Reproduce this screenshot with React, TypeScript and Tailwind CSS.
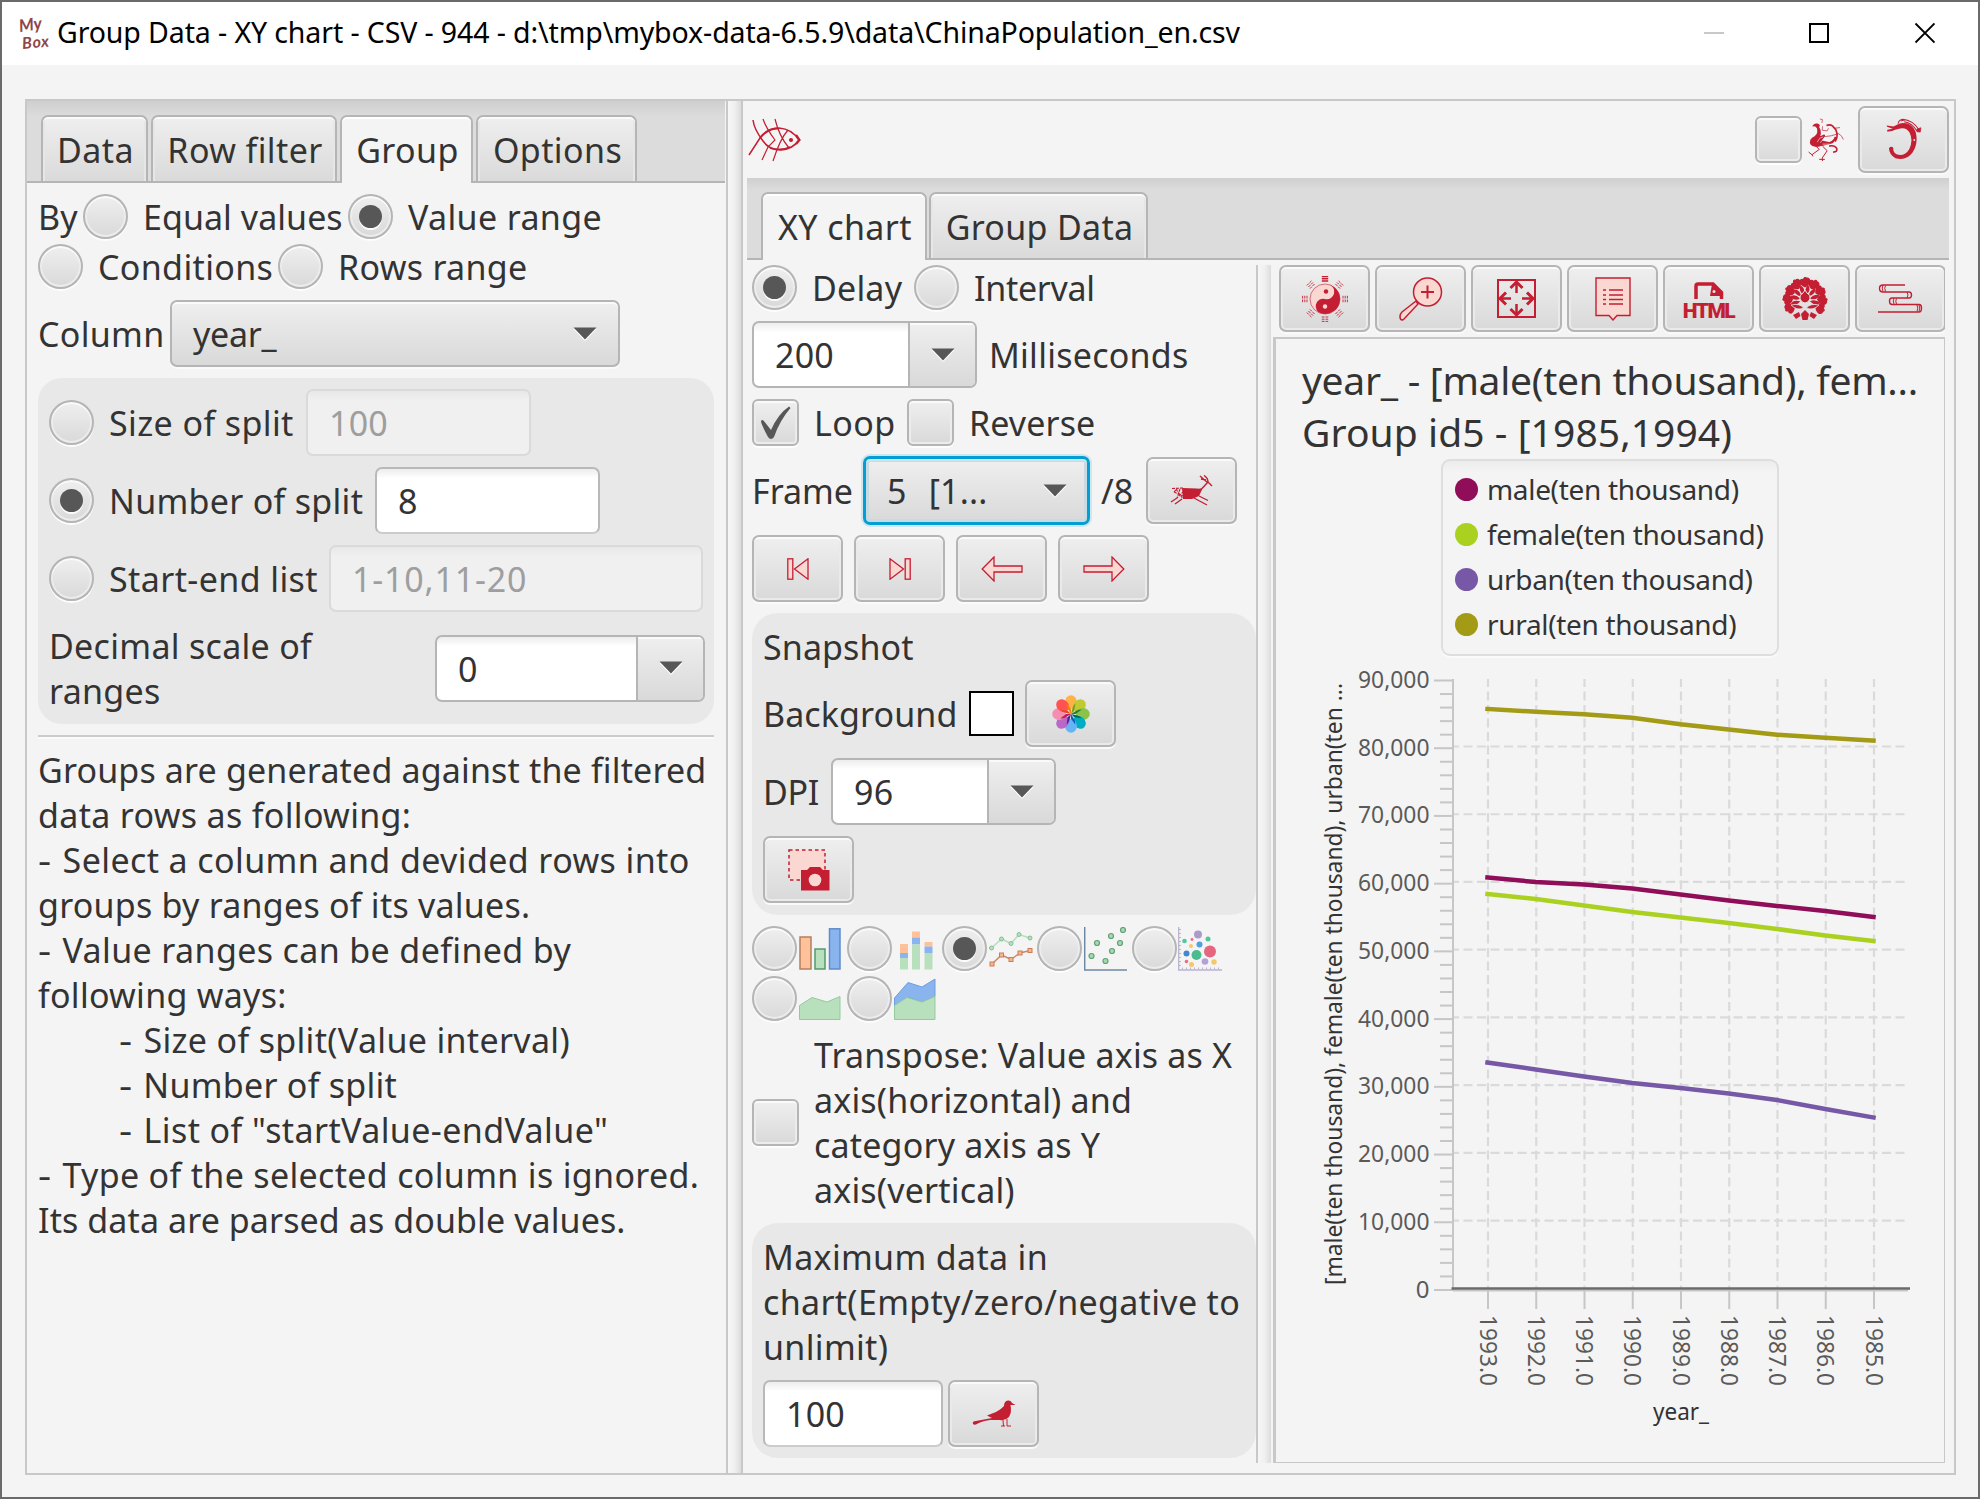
import React from "react";

const RED = "#c41e33";
const PINK = "#fbd7d2";

type Kids = { children?: React.ReactNode; className?: string };

function L({ children, className = "" }: Kids) {
  return <span className={`block shrink-0 translate-y-px whitespace-pre ${className}`}>{children}</span>;
}

function Radio({ on = false, className = "" }: { on?: boolean; className?: string }) {
  return (
    <span
      className={`flex size-[45px] shrink-0 items-center justify-center rounded-full border-2 border-[#b5b5b5] bg-linear-to-b from-[#efefef] to-[#d9d9d9] shadow-[inset_0_2px_0_#fafafa,inset_0_0_0_2px_#ececec,0_2px_0_#fdfdfd] ${className}`}
    >
      {on && <span className="size-[23px] rounded-full bg-[#575757] shadow-[0_2px_0_#fafafa]" />}
    </span>
  );
}

function Check({ on = false, className = "" }: { on?: boolean; className?: string }) {
  return (
    <span
      className={`flex size-[47px] shrink-0 items-center justify-center rounded-[6px] border-2 border-[#b5b5b5] bg-linear-to-b from-[#efefef] to-[#d9d9d9] shadow-[inset_0_2px_0_#fafafa,inset_0_0_0_2px_#ececec,0_2px_0_#fdfdfd] ${className}`}
    >
      {on && (
        <svg width="32" height="34" viewBox="0 0 32 34">
          <path d="M1 16 Q1 13 3.500 14.500 L11 24 Q18 8 29 .5 L30.500 2 Q20 14 14 31 Q11 35 8 31 Q3 22 1 16Z" fill="#575757" />
        </svg>
      )}
    </span>
  );
}

function Btn({ children, className = "w-[91px]" }: Kids) {
  return (
    <button
      className={`flex h-[67px] shrink-0 items-center justify-center rounded-[7px] border-2 border-[#b5b5b5] bg-linear-to-b from-[#efefef] to-[#d9d9d9] shadow-[inset_0_2px_0_#fafafa,inset_0_0_0_2px_#eaeaea,0_2px_0_#fafafa] ${className}`}
    >
      {children}
    </button>
  );
}

function Arrow() {
  return (
    <svg width="24" height="14" viewBox="0 0 24 14" className="shrink-0">
      <path d="M.5 2 H23.500 L12 14Z" fill="#fff" />
      <path d="M.5 .5 H23.500 L12 12.500Z" fill="#575757" />
    </svg>
  );
}

function Field({ children, className = "", disabled = false }: Kids & { disabled?: boolean }) {
  return (
    <span
      className={`flex h-[67px] shrink-0 items-center rounded-[7px] border-2 pl-[21px] ${
        disabled
          ? "border-[#dadada] bg-linear-to-b from-[#e8e8e8] to-[#f0f0f0] to-15% text-[#9e9e9e]"
          : "border-[#b9b9b9] border-b-[#cccccc] bg-linear-to-b from-[#ededed] to-white to-15%"
      } ${className}`}
    >
      <L>{children}</L>
    </span>
  );
}

function EditCombo({ children, className = "" }: Kids) {
  return (
    <span className={`flex h-[67px] shrink-0 overflow-hidden rounded-[7px] border-2 border-[#b5b5b5] bg-linear-to-b from-[#ededed] to-white to-15% ${className}`}>
      <span className="flex flex-1 items-center pl-[21px]"><L>{children}</L></span>
      <span className="flex w-[67px] items-center justify-center border-l-2 border-[#b5b5b5] bg-linear-to-b from-[#efefef] to-[#d9d9d9] shadow-[inset_0_2px_0_#fafafa]">
        <Arrow />
      </span>
    </span>
  );
}

function Tab({ children, active = false, className = "" }: Kids & { active?: boolean }) {
  return (
    <span
      className={`flex shrink-0 items-center justify-center whitespace-pre rounded-t-[7px] border-2 border-b-0 border-[#b5b5b5] pl-[2px] ${
        active
          ? "h-[68px] bg-[#f4f4f4] pt-px shadow-[inset_0_2px_0_#ffffff]"
          : "h-[66px] bg-linear-to-b from-[#efefef] to-[#dadada] pt-[3px] shadow-[inset_0_2px_0_#fafafa,inset_-2px_0_0_#e6e6e6,inset_2px_0_0_#e6e6e6]"
      } ${className}`}
    >
      {children}
    </span>
  );
}

function Divider() {
  return <div className="w-[13px] shrink-0 bg-linear-to-r from-[#f6f6f6] via-[#f0f0f0] to-[#dcdcdc]" />;
}

/* ---------- icons ---------- */

function Fish() {
  return (
    <svg width="53" height="44" viewBox="0 0 53 44" fill="none" stroke={RED} strokeWidth="1.500">
      <path d="M1 37 L12 20 Q19 10 31 10 Q44 11 51 22 Q45 31 33 32 Q21 32 15 23 Q6 11 5 2" />
      <path d="M15 1 Q18 10 27 22 L20 29 L14 42M27 1 Q31 18 41 30M40 12 Q32 21 25 43" strokeWidth="1.200" />
      <path d="M12 20 Q20 10 30 10.500M22 30 Q34 33 42 29" strokeWidth="1.800" />
      <path d="M48 17 L51.500 22 L48 26" strokeWidth="2.200" />
      <circle cx="43" cy="22" r="1.300" fill={RED} />
    </svg>
  );
}

function Phoenix() {
  return (
    <svg width="36" height="43" viewBox="205 53 107 130" fill="none" stroke={RED}>
      <path d="M217 78 Q222 67 232 70 Q243 72 238 81 Q245 90 243 101 Q238 110 246 106 Q256 99 256 108 L246 121 L270 126 Q258 137 243 138 Q222 146 211 132 Q206 116 224 108 Q236 98 231 84 Q226 76 219 79Z" fill={RED} stroke="none" />
      <path d="M240 56 L248 58 L246 68M248 78 L247 90 L262 92 L266 84" strokeWidth="2" />
      <path d="M260 76 Q270 71 278 77 L288 88 Q297 108 286 124" strokeWidth="5" />
      <path d="M288 110 Q284 130 256 131" strokeWidth="7" />
      <path d="M284 84 L301 82M290 100 Q302 98 311 118M256 109 Q276 108 290 102" strokeWidth="2.200" />
      <path d="M268 138 Q284 134 291 145 Q294 156 280 156" strokeWidth="5" />
      <path d="M230 140 L238 148 L216 164 M206 156 L216 164 L219 169M248 138 L262 152 L247 174 M238 178 L255 178 M247 174 L248 183" strokeWidth="3" />
      <path d="M232 126 Q238 110 250 110M241 128 L256 110M248 132 H272" stroke="#f4f4f4" strokeWidth="1.800" />
    </svg>
  );
}

function Dragon() {
  return (
    <svg width="36" height="43" viewBox="440 55 107 128" fill="none" stroke={RED}>
      <path d="M474 74 Q512 60 528 96 Q537 130 519 158 Q500 184 468 175 Q448 162 449 144 Q456 137 462 144 Q459 156 473 164 Q496 170 509 148 Q522 122 510 98 Q500 82 482 86 L467 90 Q456 97 443 95 L444 90 L460 87 L443 81 L442 77 L462 80 Q466 78 474 74Z" fill={RED} stroke="none" />
      <path d="M476 72 Q478 60 490 59 Q520 62 538 90 M494 66 Q518 70 532 94 M484 64 Q500 58 508 64" strokeWidth="3" />
      <path d="M532 88 L544 84 L542 97 L532 96Z" fill={RED} strokeWidth="2" />
      <rect x="522" y="118" width="4" height="5" fill="#fff" stroke="none" />
    </svg>
  );
}

function Bagua() {
  return (
    <svg width="46" height="46" viewBox="-23 -23 46 46">
      <circle r="15" fill={PINK} stroke={RED} strokeWidth=".6" />
      <path d="M0 -15 A15 15 0 0 1 0 15 A7.500 7.500 0 0 1 0 0 A7.500 7.500 0 0 0 0 -15Z" fill={RED} transform="rotate(14)" />
      <circle cx="1" cy="-7.500" r="2.200" fill={RED} />
      <circle cx="0" cy="7.500" r="2.200" fill={PINK} />
      {[0, 45, 90, 135, 180, 225, 270, 315].map((a, i) => (
        <path
          key={a}
          d="M-3.200 -22.400H3.200M-3.200 -20.200H3.200M-3.200 -18H3.200"
          transform={`rotate(${a})`}
          stroke={RED}
          strokeWidth={i === 0 ? 1.4 : 0.9}
          strokeDasharray={i === 0 ? undefined : "2.700 1"}
        />
      ))}
    </svg>
  );
}

function Magnifier() {
  return (
    <svg width="44" height="44" viewBox="0 0 44 44" stroke={RED} strokeWidth="1.500">
      <path d="M1.500 42 Q0 38 3 35 L17 24 L19 27 L5 42 Q3 44 1.500 42Z" fill={PINK} />
      <circle cx="28.500" cy="15" r="14" fill={PINK} />
      <path d="M28.500 8.500V21.500M22 15H35" strokeWidth="2" />
    </svg>
  );
}

function FourArrows() {
  return (
    <svg width="39" height="39" viewBox="0 0 39 39" fill="none" stroke={RED} strokeWidth="2">
      <rect x="1" y="1" width="37" height="37" />
      <path d="M19.500 3V14M19.500 25V36M3 19.500H14M25 19.500H36" strokeWidth="2.500" />
      <path d="M13.500 9 L19.500 3 L25.500 9M13.500 30 L19.500 36 L25.500 30M9 13.500 L3 19.500 L9 25.500M30 13.500 L36 19.500 L30 25.500" strokeWidth="3" />
    </svg>
  );
}

function Note() {
  return (
    <svg width="36" height="44" viewBox="0 0 36 44" stroke={RED}>
      <path d="M1 1H35V38.500H22 L18 43 L14 38.500H1Z" fill={PINK} strokeWidth="1.400" />
      <path d="M14 13H28M14 18H28M14 22.500H28M14 27H28" strokeWidth="1.400" />
      <path d="M8 13H11M8 18H11M8 22.500H11M8 27H11" strokeWidth="1.600" />
    </svg>
  );
}

function HtmlIcon() {
  return (
    <span className="flex flex-col items-center pt-[8px]">
      <svg width="30" height="17" viewBox="0 0 30 17">
        <path d="M2 17 V4 Q2 2 4 2 H19 L27.500 10.500 V17" fill="none" stroke={RED} strokeWidth="3.500" />
        <path d="M18 2 L28 11 V14 H16Z" fill={RED} />
        <circle cx="20" cy="9.500" r="1.500" fill="#e6e6e6" />
      </svg>
      <span className="font-['Roboto'] text-[21px] leading-[24px] font-black tracking-[-1.5px] text-[#c41e33]">HTML</span>
    </span>
  );
}

function Peony() {
  const petal = "M0 -12 Q-5.500 -14 -5.500 -19 Q-4 -21.500 -2 -20.500 Q-.5 -24 1.500 -22 Q5 -22.500 5.500 -18.500 Q5 -14.500 0 -12Z";
  const side = "M0 -5 Q-4 -10 -1 -15.500 Q4 -12 0 -5Z";
  return (
    <svg width="46" height="44" viewBox="-23 -22 46 44" fill={RED}>
      {[-120, -90, -60, -30, 0, 30, 60, 90, 120].map((a) => (
        <path key={a} d={petal} transform={`translate(0 .5) rotate(${a})`} />
      ))}
      {[-105, -75, -45, -15, 15, 45, 75, 105].map((a) => (
        <path key={a} d={side} transform={`translate(0 1) rotate(${a})`} />
      ))}
      <path d="M0 -9 L2 -6 Q6 -4 5 0 Q3 4 0 4 Q-3 4 -5 0 Q-6 -4 -2 -6Z" stroke="#e6e6e6" strokeWidth="1" />
      <path d="M-14 6 Q-5 4 -1.500 9 Q-8 12 -14 6ZM14 6 Q5 4 1.500 9 Q8 12 14 6Z" stroke="#e6e6e6" strokeWidth=".8" />
      <path d="M0 11 L4 15 L2.500 21 H-2.500 L-4 15ZM-6 13 L-4.500 17 L-9 20 L-12 16ZM6 13 L4.500 17 L9 20 L12 16Z" />
    </svg>
  );
}

function Scroll() {
  return (
    <svg width="45" height="29" viewBox="0 0 45 29" fill="none" stroke={RED} strokeWidth="1.400">
      <path d="M27 1 H5 Q1.500 1 1.500 4.500 Q1.500 8 5 8 H31 Q33.500 8 33.500 11 Q33.500 14 31 14 H14 Q11.500 14 11.500 17 Q11.500 20.500 14 20.500 H41 Q43.500 20.500 43.500 24 Q43.500 28 41 28 H0" />
      <path d="M5 1 Q3.500 4 5 7.500M7.500 1.500 Q6 4 7.500 7.500M29 8 Q31 11 29 14M16 14 Q14.500 17 16 20M18.500 14.500 Q17 17 18.500 20M39 21 Q40.500 24 39 27.500M41 21 Q42.500 24 41 27.500" strokeWidth="1" />
    </svg>
  );
}

function Deer() {
  return (
    <svg width="43" height="31" viewBox="0 0 43 31" fill="none" stroke={RED}>
      <path d="M12 13 L27 13.500 Q31 14 33 12.500 L29 21 L22 24 L13 24Z" fill={RED} stroke="none" />
      <path d="M32 13.500 L38 7 L42 11M38 8 L30 1M38 7 Q38 3 34 .5M31 4 L36 5" strokeWidth="1.400" />
      <path d="M24 23 L37 30M29 21 L38 25.500M12 24 L5 29M7 23 L1 27" strokeWidth="1.300" />
      <path d="M2 13.500 L13 13M4 17 L13 21M6 14 L13 24M10 14 L7 23 L13 17M4 17 L8 13" strokeWidth="1.100" strokeDasharray="3 1" />
    </svg>
  );
}

function SkipStart({ flip = false }: { flip?: boolean }) {
  return (
    <svg width="22" height="22" viewBox="0 0 22 22" className={flip ? "-scale-x-100" : ""} fill={PINK} stroke={RED} strokeWidth="1.300">
      <rect x=".8" y=".8" width="5" height="20.400" />
      <path d="M21 .8 V21.200 L7.500 11Z" />
    </svg>
  );
}

function LongArrow({ flip = false }: { flip?: boolean }) {
  return (
    <svg width="42" height="26" viewBox="0 0 42 26" className={flip ? "-scale-x-100" : ""} fill={PINK} stroke={RED} strokeWidth="1.300">
      <path d="M1.200 13 L13 1 V10 H41 V16 H13 V25Z" />
    </svg>
  );
}

function Palette() {
  const petals = ["#ffb347", "#bfcb30", "#8bc34a", "#00acc1", "#64b5f6", "#ba68c8", "#f48fb1", "#ff5252"];
  const deep = ["#f57c00", "#7aa11c", "#2e7d32", "#00695c", "#0d5cb6", "#4527a0", "#c2185b", "#e64a19"];
  return (
    <svg width="38" height="40" viewBox="-20 -20 40 40">
      {petals.map((c, i) => (
        <ellipse key={c} cx="0" cy="-12.500" rx="6.200" ry="7.300" fill={c} transform={`rotate(${i * 45})`} />
      ))}
      {deep.map((c, i) => (
        <path key={c} d="M0 0 L-3.600 -6 Q-5 -9 -4.500 -11 L0 -5Z" fill={c} transform={`rotate(${i * 45})`} />
      ))}
    </svg>
  );
}

function Camera() {
  return (
    <svg width="42" height="42" viewBox="0 0 42 42">
      <rect x="1" y="1" width="36" height="30" fill={PINK} stroke={RED} strokeWidth="1.500" strokeDasharray="3.500 3" />
      <path d="M13 21 H19 L22 18 H32 L35 21 H41.500 V41.500 H13Z" fill={RED} />
      <circle cx="27" cy="31" r="6.300" fill={PINK} />
    </svg>
  );
}

function Bird() {
  return (
    <svg width="44" height="27" viewBox="0 0 44 27">
      <path d="M1 24 Q0 21 4 21 L20 18 L15 15.500 L24 12 Q29 9.500 32 6 Q32 1 36 .5 Q39 0 40 3 L43.500 5 L38.500 5 Q40 12 37 17 Q33 21 28 20 L18 20 Q9 21 4 24.500 Q2 25 1 24Z" fill={RED} />
      <path d="M31 20 L31.500 26M35 19 V26M29 26 H33M35 26 H39" fill="none" stroke={RED} strokeWidth="1" />
    </svg>
  );
}

function BarIcon() {
  return (
    <svg width="42" height="42" viewBox="0 0 42 42" strokeWidth="1.500">
      <rect x="1" y="9" width="11" height="32" fill="#ffc19a" stroke="#b57f5c" />
      <rect x="16" y="21" width="10" height="20" fill="#b9e0bd" stroke="#539a6c" />
      <rect x="30.500" y=".8" width="10.500" height="40.200" fill="#8ab4ee" stroke="#5d8ccc" />
    </svg>
  );
}

function StackIcon() {
  return (
    <svg width="42" height="42" viewBox="0 0 42 42">
      <path d="M6 16h8v9H6zM18 3.500h8v6h-8zM30.500 14h8v4.500h-8z" fill="#ffc19a" />
      <path d="M6 25h8v5H6zM18 9.500h8v7h-8zM30.500 18.500h8v6.500h-8z" fill="#8ab4ee" />
      <path d="M6 30h8v11.500H6zM18 16.500h8v25h-8zM30.500 25h8v16.500h-8z" fill="#b9e0bd" />
    </svg>
  );
}

function LineIcon() {
  const a = [[1.5, 20], [11.5, 11], [21, 15.5], [29, 6.5], [40, 10]];
  const b = [[2, 36], [11.5, 27], [21, 31.5], [30, 25], [40, 22.5]];
  return (
    <svg width="44" height="42" viewBox="-1 0 44 42">
      <polyline points={a.map((p) => p.join()).join(" ")} fill="none" stroke="#b9dcc0" strokeWidth="1.500" />
      <polyline points={b.map((p) => p.join()).join(" ")} fill="none" stroke="#c98a68" strokeWidth="1.500" />
      {a.map(([x, y]) => <circle key={x} cx={x} cy={y} r="2" fill="#b9e0bd" stroke="#84bf95" />)}
      {b.map(([x, y]) => <rect key={x} x={x - 2} y={y - 2} width="4" height="4" fill="#f8b48c" stroke="#cc7d55" />)}
    </svg>
  );
}

function ScatterIcon() {
  const pts = [[8.5, 29], [14, 16], [22.5, 34], [28, 9], [29, 24], [37, 16], [40, 3]];
  return (
    <svg width="44" height="44" viewBox="1 0 44 44">
      <path d="M1.700 0 V43 H44" fill="none" stroke="#6d88a5" strokeWidth="1.500" />
      {pts.map(([x, y]) => <circle key={x} cx={x} cy={y} r="2.500" fill="#a8d8b0" stroke="#5ea377" strokeWidth="1.200" />)}
    </svg>
  );
}

function BubbleIcon() {
  const pts: [number, number, number, string][] = [
    [21, 7.5, 4, "#ab9bcb"], [7.5, 14, 2.3, "#52c79b"], [15, 12.5, 1.4, "#f06a85"], [31, 12, 2.5, "#52c79b"],
    [14, 19, 2, "#f5c768"], [22.5, 17.5, 3, "#4f9ee8"], [9.5, 26.5, 3, "#4488cc"], [19.5, 28, 5, "#4dbb90"],
    [33, 24.5, 6, "#e6657f"], [9.5, 34.5, 1.8, "#f06a85"], [14.5, 37.5, 2.5, "#f5c768"], [28, 34.5, 3.3, "#b3a3d4"], [37, 35, 2.7, "#f5c768"],
  ];
  return (
    <svg width="44" height="44" viewBox="1 0 44 44">
      <path d="M1.700 0 V43 H45" fill="none" stroke="#b9b3cf" strokeWidth="1.300" />
      <path d="M3 2 V42" stroke="#b9b3cf" strokeWidth="2" strokeDasharray="1 3" />
      <path d="M5 41.500 H44" stroke="#b9b3cf" strokeWidth="2" strokeDasharray="1 3" />
      {pts.map(([x, y, r, c]) => <circle key={`${x}-${y}`} cx={x} cy={y} r={r} fill={c} />)}
    </svg>
  );
}

function AreaIcon({ stacked = false }: { stacked?: boolean }) {
  return (
    <svg width="42" height="42" viewBox="0 0 42 42" strokeWidth="1">
      {stacked && <path d="M.5 20 L14 4.500 L28 9 L41 1 V18.500 L28 24 L14 19.500 L.5 28Z" fill="#8ab4ee" stroke="#6f9ddd" />}
      <path d="M.5 27.500 L13 19.500 L28 24 L41 18.500 V41.500 H.5Z" fill="#b9e0bd" stroke="#94c9a0" />
    </svg>
  );
}

/* ---------- chart ---------- */

const years = ["1993.0", "1992.0", "1991.0", "1990.0", "1989.0", "1988.0", "1987.0", "1986.0", "1985.0"];
const series = [
  { color: "#a39a16", y: [709, 711.7, 714.3, 717.7, 724.3, 729.5, 734.7, 737.7, 740.7] },
  { color: "#8f0d59", y: [877.5, 882, 884.5, 888.5, 894.5, 900.5, 906, 911, 917] },
  { color: "#abd120", y: [894, 899, 905.5, 912, 917.5, 923, 929, 935.5, 941] },
  { color: "#7658a6", y: [1062.5, 1069.5, 1076.5, 1083, 1088, 1093.5, 1100, 1109, 1117.5] },
];
const tickX = (i: number) => 1488 + i * 48.25;
const tickY = (i: number) => 680.5 + i * 67.72;

function Chart() {
  return (
    <svg width="668" height="806" viewBox="1276 656 668 806" className="block font-['Noto_Sans'] tracking-normal">
      {years.map((y, i) => (
        <line key={y} x1={tickX(i)} x2={tickX(i)} y1="679" y2="1288" stroke="#dadada" strokeWidth="2.200" strokeDasharray="9 4.500" strokeDashoffset="1" />
      ))}
      {[1, 2, 3, 4, 5, 6, 7, 8].map((i) => (
        <line key={i} x1="1453" x2="1906" y1={tickY(i) - 1.7} y2={tickY(i) - 1.7} stroke="#dadada" strokeWidth="2.200" strokeDasharray="9 4.500" strokeDashoffset="3" />
      ))}
      {Array.from({ length: 46 }, (_, i) => (
        <line key={i} x1={i % 5 ? 1440 : 1434} x2="1453" y1={680.5 + i * 13.544} y2={680.5 + i * 13.544} stroke="#c6c6c6" strokeWidth="2" />
      ))}
      <line x1="1453" x2="1453" y1="679" y2="1291" stroke="#c6c6c6" strokeWidth="2" />
      <line x1="1453" x2="1908" y1="1290.5" y2="1290.5" stroke="#c6c6c6" strokeWidth="2" />
      {years.map((y, i) => (
        <line key={y} x1={tickX(i)} x2={tickX(i)} y1="1290" y2="1309" stroke="#c6c6c6" strokeWidth="2" />
      ))}
      <line x1="1451.500" x2="1910" y1="1288.500" y2="1288.500" stroke="#6a6a6a" strokeWidth="2.400" />
      {series.map((s) => (
        <polyline key={s.color} points={s.y.map((v, i) => `${tickX(i) - 0.5},${v}`).join(" ")} fill="none" stroke={s.color} strokeWidth="4.500" strokeLinecap="square" strokeLinejoin="round" />
      ))}
      <g fill="#5a5a5a" className="text-[24px]">
        {[90, 80, 70, 60, 50, 40, 30, 20, 10].map((v, i) => (
          <text key={v} x="1358" y={tickY(i) + 7.5} textLength="71.500" lengthAdjust="spacingAndGlyphs">{`${v},000`}</text>
        ))}
        <text x="1429.500" y="1298" textAnchor="end">0</text>
        {years.map((y, i) => (
          <text key={y} transform={`translate(${tickX(i) - 8.5} 1315) rotate(90)`} textLength="71" lengthAdjust="spacingAndGlyphs">{y}</text>
        ))}
      </g>
      <g fill="#333" className="text-[24px]">
        <text x="1653" y="1420" textLength="56" lengthAdjust="spacingAndGlyphs">year_</text>
        <text transform="translate(1342 1285) rotate(-90)" textLength="602" lengthAdjust="spacingAndGlyphs" className="text-[23px]">
          [male(ten thousand), female(ten thousand), urban(ten ...
        </text>
      </g>
    </svg>
  );
}

const legend: [string, string][] = [
  ["male(ten thousand)", "bg-[#8f0d59]"],
  ["female(ten thousand)", "bg-[#abd120]"],
  ["urban(ten thousand)", "bg-[#7658a6]"],
  ["rural(ten thousand)", "bg-[#a39a16]"],
];

/* ---------- panels ---------- */

function Dash({ children, className = "" }: Kids) {
  return (
    <L className={className}>
      <span className="mr-[4px] inline-block origin-left scale-x-120">- </span>
      {children}
    </L>
  );
}

function GroupPanel() {
  return (
    <section className="flex w-[701px] shrink-0 flex-col border-r-2 border-[#c8c8c8]">
      <div className="mr-px flex h-[82px] shrink-0 items-start border-b-2 border-[#b5b5b5] bg-linear-to-b from-[#cfcfcf] to-[#dcdcdc] to-20% pt-[14px] pl-[14px]">
        <Tab className="mr-[3px] w-[107px] tracking-[0.4px]">Data</Tab>
        <Tab className="mr-[3px] w-[186px] tracking-[0.4px]">Row filter</Tab>
        <Tab active className="mr-[3px] w-[133px] tracking-[0.4px]">Group</Tab>
        <Tab className="w-[161px] tracking-[0.4px]">Options</Tab>
      </div>
      <div className="flex flex-col pt-[11px] pr-[12px] pl-[11px]">
        <div className="flex h-[50px]">
          <L className="w-[45px]">By</L>
          <Radio />
          <L className="ml-[15px] w-[205px] tracking-[0.05px]">Equal values</L>
          <Radio on />
          <L className="ml-[15px] tracking-[0.35px]">Value range</L>
        </div>
        <div className="flex h-[56px]">
          <Radio />
          <L className="ml-[15px] w-[180px] tracking-[0.35px]">Conditions</L>
          <Radio />
          <L className="ml-[15px] tracking-[0.3px]">Rows range</L>
        </div>
        <div className="flex items-center">
          <L className="w-[132px] tracking-[0.3px]">Column</L>
          <span className="flex h-[67px] w-[450px] items-center justify-between rounded-[7px] border-2 border-[#b5b5b5] bg-linear-to-b from-[#efefef] to-[#d9d9d9] pr-[21px] pl-[21px] tracking-[-0.3px] shadow-[inset_0_2px_0_#fafafa,0_2px_0_#fafafa]">
            <L>year_</L>
            <Arrow />
          </span>
        </div>
        <div className="mt-[11px] flex h-[346px] flex-col gap-[11px] rounded-[24px] bg-[#e8e8e8] pt-[11px] pr-[9px] pl-[11px]">
          <div className="flex items-center">
            <Radio />
            <L className="ml-[15px] w-[197px] tracking-[0.4px]">Size of split</L>
            <Field disabled className="w-[225px]">100</Field>
          </div>
          <div className="flex items-center">
            <Radio on />
            <L className="ml-[15px] w-[266px] tracking-[0.3px]">Number of split</L>
            <Field className="w-[225px]">8</Field>
          </div>
          <div className="flex items-center">
            <Radio />
            <L className="ml-[15px] w-[220px] tracking-[0.4px]">Start-end list</L>
            <Field disabled className="w-[374px] tracking-[0.8px]">1-10,11-20</Field>
          </div>
          <div className="flex items-center justify-between">
            <L className="tracking-[0.3px]">{"Decimal scale of\nranges"}</L>
            <EditCombo className="w-[270px]">0</EditCombo>
          </div>
        </div>
        <div className="mt-[11px] h-[4px] border-t-2 border-b-2 border-t-[#cbcbcb] border-b-[#fafafa]" />
        <div className="mt-[8px] flex flex-col">
          <L className="tracking-[0.16px]">Groups are generated against the filtered</L>
          <L className="tracking-[0.33px]">data rows as following:</L>
          <Dash className="tracking-[0.4px]">Select a column and devided rows into</Dash>
          <L className="tracking-[0.24px]">groups by ranges of its values.</L>
          <Dash className="tracking-[0.37px]">Value ranges can be defined by</Dash>
          <L className="tracking-[0.28px]">following ways:</L>
          <Dash className="pl-[81px] tracking-[0.33px]">Size of split(Value interval)</Dash>
          <Dash className="pl-[81px] tracking-[0.27px]">Number of split</Dash>
          <Dash className="pl-[81px] tracking-[0.4px]">List of "startValue-endValue"</Dash>
          <Dash className="tracking-[0.33px]">Type of the selected column is ignored.</Dash>
          <L className="tracking-[0.1px]">Its data are parsed as double values.</L>
        </div>
      </div>
    </section>
  );
}

function PlayPanel() {
  return (
    <div className="flex w-[511px] shrink-0 flex-col border-r-2 border-[#c8c8c8] pl-[5px]">
      <div className="flex h-[56px]">
        <Radio on />
        <L className="ml-[15px] w-[102px]">Delay</L>
        <Radio />
        <L className="ml-[15px] tracking-[-0.3px]">Interval</L>
      </div>
      <div className="flex items-center">
        <EditCombo className="mr-[12px] w-[225px]">200</EditCombo>
        <L className="tracking-[0.25px]">Milliseconds</L>
      </div>
      <div className="mt-[11px] flex items-center">
        <Check on />
        <L className="ml-[15px] w-[93px] tracking-[0.4px]">Loop</L>
        <Check />
        <L className="ml-[15px] tracking-[0.1px]">Reverse</L>
      </div>
      <div className="mt-[11px] flex items-center">
        <L className="w-[111px] tracking-normal">Frame</L>
        <span className="-my-px flex h-[69px] w-[227px] shrink-0 items-center justify-between rounded-[7px] border-3 border-[#039ed3] bg-linear-to-b from-[#efefef] to-[#d9d9d9] pr-[20px] pl-[21px] whitespace-pre shadow-[0_0_0_2px_#cfe6ee,inset_0_2px_0_#c9e6f1,inset_0_0_0_3px_#c8dbe3]">
          <span className="flex gap-[22px]"><L>5</L><L>[1...</L></span>
          <Arrow />
        </span>
        <L className="ml-[11px] w-[45px]">/8</L>
        <Btn><Deer /></Btn>
      </div>
      <div className="mt-[11px] flex gap-[11px]">
        <Btn><SkipStart /></Btn>
        <Btn><SkipStart flip /></Btn>
        <Btn><LongArrow /></Btn>
        <Btn><LongArrow flip /></Btn>
      </div>
      <div className="mt-[11px] flex h-[302px] shrink-0 flex-col rounded-[26px] bg-[#e8e8e8] pt-[11px] pl-[11px]">
        <L className="h-[56px] tracking-[0.1px]">Snapshot</L>
        <div className="flex items-center">
          <L className="w-[206px] tracking-[0.1px]">Background</L>
          <span className="mr-[11px] size-[45px] border-2 border-black bg-white" />
          <Btn><Palette /></Btn>
        </div>
        <div className="mt-[11px] flex items-center">
          <L className="w-[68px] tracking-[-0.3px]">DPI</L>
          <EditCombo className="w-[225px]">96</EditCombo>
        </div>
        <div className="mt-[11px] flex"><Btn><Camera /></Btn></div>
      </div>
      <div className="mt-[11px] flex h-[50px] shrink-0 items-start">
        <Radio className="mr-[2px]" /><span className="w-[48px] pt-[2px]"><BarIcon /></span>
        <Radio className="mr-[2px]" /><span className="w-[48px] pt-[2px]"><StackIcon /></span>
        <Radio on className="mr-[2px]" /><span className="w-[48px] pt-[2px]"><LineIcon /></span>
        <Radio className="mr-[2px]" /><span className="w-[48px] pt-px"><ScatterIcon /></span>
        <Radio className="mr-px" /><span className="w-[48px] pt-px"><BubbleIcon /></span>
      </div>
      <div className="flex h-[56px] shrink-0 items-start">
        <Radio className="mr-[2px]" /><span className="w-[48px] pt-[2px]"><AreaIcon /></span>
        <Radio className="mr-[2px]" /><span className="w-[48px] pt-[2px]"><AreaIcon stacked /></span>
      </div>
      <div className="flex items-center">
        <Check className="mr-[15px]" />
        <L className="tracking-[0.18px]">{"Transpose: Value axis as X\naxis(horizontal) and\ncategory axis as Y\naxis(vertical)"}</L>
      </div>
      <div className="mt-[11px] flex h-[235px] shrink-0 flex-col rounded-[26px] bg-[#e8e8e8] pt-[11px] pl-[11px]">
        <L className="tracking-[0.33px]">{"Maximum data in\nchart(Empty/zero/negative to\nunlimit)"}</L>
        <div className="mt-[11px] flex gap-[5px]">
          <Field className="w-[180px]">100</Field>
          <Btn><Bird /></Btn>
        </div>
      </div>
    </div>
  );
}

function ChartPanel() {
  return (
    <div className="flex w-[672px] shrink-0 flex-col overflow-hidden">
      <div className="flex h-[72px] shrink-0 gap-[5px] pl-[6px]">
        {[Bagua, Magnifier, FourArrows, Note, HtmlIcon, Peony, Scroll].map((Icon, i) => (
          <Btn key={i}><Icon /></Btn>
        ))}
      </div>
      <div className="flex flex-1 flex-col border-t-2 border-r border-b border-l-3 border-[#c8c8c8]">
        <div className="flex h-[120px] shrink-0 flex-col pt-[14px] pl-[26px] text-[39px] leading-[52px]">
          <L className="tracking-[-0.27px]">year_ - [male(ten thousand), fem...</L>
          <L className="tracking-[0.08px]">Group id5 - [1985,1994)</L>
        </div>
        <div className="ml-[165px] flex h-[197px] w-[338px] shrink-0 flex-col rounded-[9px] border-2 border-[#dedede] bg-linear-to-b from-[#ececec] to-[#f4f4f4] to-6% pt-[6px] pl-[12px] text-[28px] tracking-[-0.32px] shadow-[0_2px_0_#fafafa]">
          {legend.map(([name, dot]) => (
            <div key={name} className="flex h-[45px] items-center gap-[9px] whitespace-pre">
              <span className={`size-[23px] rounded-full ${dot}`} />
              {name}
            </div>
          ))}
        </div>
        <Chart />
      </div>
    </div>
  );
}

export default function App() {
  return (
    <div className="flex h-[1499px] w-[1980px] flex-col overflow-hidden border-2 border-[#6a6a6a] bg-[#f4f4f4] font-['Noto_Sans',sans-serif] text-[34px] leading-[45px] tracking-[0.2px] text-[#333]">
      <header className="flex h-[63px] shrink-0 items-center bg-white text-black">
        <svg width="40" height="56" viewBox="-3 -11 40 56" className="ml-[14px]" fill="#8d4648">
          <text x="0" y="14" transform="rotate(-8 8 10)" className="font-['Lato'] text-[17px] font-bold italic tracking-normal">My</text>
          <text x="3" y="31" transform="rotate(-5 14 26)" className="font-['Lato'] text-[16px] font-bold italic tracking-normal" textLength="27">Box</text>
        </svg>
        <p className="ml-px mb-[2px] whitespace-pre text-[28.5px] tracking-[-0.11px]">Group Data - XY chart - CSV - 944 - d:\tmp\mybox-data-6.5.9\data\ChinaPopulation_en.csv</p>
        <svg width="232" height="22" viewBox="0 0 232 22" className="mr-[43px] mb-[2px] ml-auto shrink-0" fill="none">
          <path d="M1 11H21" stroke="#c8c8c8" strokeWidth="2" />
          <rect x="107" y="2" width="18" height="18" stroke="#000" strokeWidth="2" />
          <path d="M212.500 1.500 L231.500 20.500M231.500 1.500 L212.500 20.500" stroke="#000" strokeWidth="1.800" />
        </svg>
      </header>
      <main className="mt-[34px] ml-[23px] flex h-[1376px] w-[1931px] shrink-0 border-2 border-[#c8c8c8]">
        <GroupPanel />
        <Divider />
        <section className="flex flex-1 flex-col border-l-2 border-[#c8c8c8]">
          <div className="flex h-[77px] shrink-0 items-center pr-[5px] pl-[5px]">
            <Fish />
            <Check className="mr-[6px] ml-auto" />
            <Phoenix />
            <Btn className="ml-[14px] w-[91px]"><Dragon /></Btn>
          </div>
          <div className="mr-[5px] ml-[4px] flex h-[82px] shrink-0 items-start border-b-2 border-[#b5b5b5] bg-linear-to-b from-[#cfcfcf] to-[#dcdcdc] to-15% pt-[14px] pl-[14px]">
            <Tab active className="mr-[2px] w-[166px] tracking-[0.4px]">XY chart</Tab>
            <Tab className="w-[219px] tracking-[0.3px]">Group Data</Tab>
          </div>
          <div className="mt-[5px] ml-[4px] flex h-[1198px]">
            <PlayPanel />
            <div className="flex w-[15px] shrink-0"><Divider /></div>
            <ChartPanel />
          </div>
        </section>
      </main>
    </div>
  );
}
